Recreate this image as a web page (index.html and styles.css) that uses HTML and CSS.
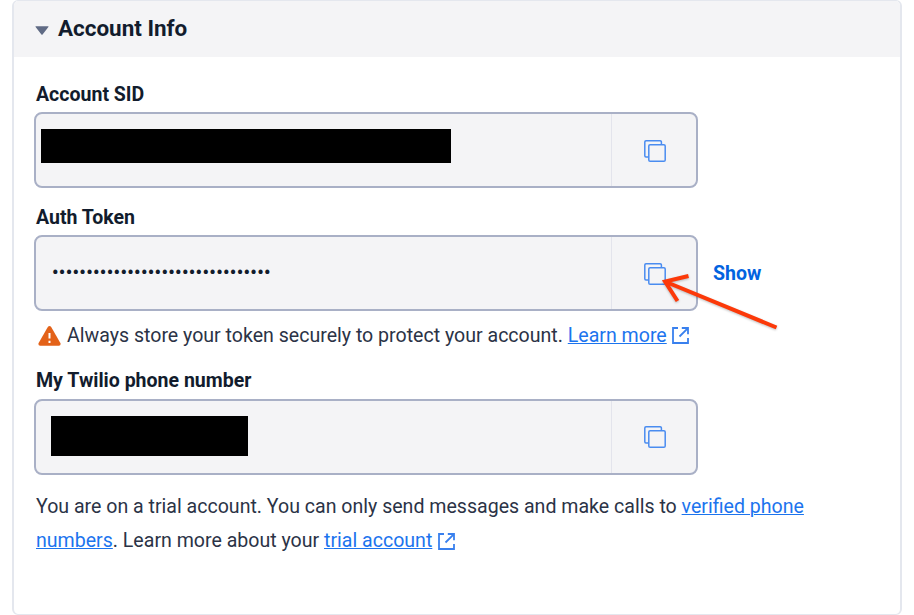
FILE: index.html
```html
<!DOCTYPE html>
<html lang="en">
<head>
<meta charset="utf-8">
<title>Account Info</title>
<link rel="stylesheet" href="styles.css">
</head>
<body>
<svg class="defs" width="0" height="0" aria-hidden="true">
  <symbol id="copy" viewBox="0 0 22 22">
    <path d="M4.500 17H2a1.200 1.200 0 0 1-1.200-1.200V2A1.200 1.200 0 0 1 2 .8h14.200A1.200 1.200 0 0 1 17.400 2v2.700"/>
    <rect x="4.800" y="4.800" width="16.400" height="16.400" rx="1.300"/>
  </symbol>
  <symbol id="external" viewBox="0 0 17 17">
    <path d="M6 1H1v15h15v-5M9.800 1H16v6.200M15.700 1.300 7.500 9.500"/>
  </symbol>
</svg>
<main class="card">
  <header class="card-header">
    <svg class="caret" viewBox="0 0 14 9"><path d="M.8.3h12.400q.6.100.2.600L7.600 8.400q-.6.500-1.200 0L.6.900Q.2.400.8.300z"/></svg>
    <h1>Account Info</h1>
  </header>
  <div class="card-body">
    <section class="group">
      <h2>Account SID</h2>
      <div class="field">
        <div class="value"><span class="redacted redacted-sid"></span></div>
        <button class="copy" aria-label="Copy"><svg><use href="#copy"/></svg></button>
      </div>
    </section>
    <section class="group group-token">
      <h2>Auth Token</h2>
      <div class="field-row">
        <div class="field">
          <div class="value dots">••••••••••••••••••••••••••••••••</div>
          <button class="copy" aria-label="Copy"><svg><use href="#copy"/></svg></button>
        </div>
        <a class="show">Show</a>
        <svg class="arrow" viewBox="0 0 116 58"><path d="M114.500 54.500 3 8.500M26.500 3 3 8.500 15.500 28"/></svg>
      </div>
      <p class="help">
        <svg class="warning" viewBox="0 0 23 20"><path class="warning-shape" d="M9.800 1Q11.500-.8 13.200 1L22.500 17.200Q23.100 19.600 20.800 19.800H2.200Q-.1 19.600.5 17.200z"/><path class="warning-mark" d="M11.500 7v5.600M11.500 14.800v2.200"/></svg>
        <span>Always store your token securely to protect your account. <a class="link">Learn more</a></span>
        <svg class="external"><use href="#external"/></svg>
      </p>
    </section>
    <section class="group group-phone">
      <h2>My Twilio phone number</h2>
      <div class="field">
        <div class="value"><span class="redacted redacted-phone"></span></div>
        <button class="copy" aria-label="Copy"><svg><use href="#copy"/></svg></button>
      </div>
    </section>
    <p class="trial">You are on a trial account. You can only send messages and make calls to <a class="link">verified phone<br>numbers</a>. Learn more about your <a class="link">trial account</a><svg class="external"><use href="#external"/></svg></p>
  </div>
</main>
</body>
</html>
```
FILE: styles.css
```css
* { box-sizing: border-box; }
body {
  margin: 0;
  height: 615px;
  padding: 0 12px;
  overflow: hidden;
  background: #fff;
  color: #2b3346;
  font-family: Roboto, sans-serif;
  font-size: 19.570px;
}
h1, h2, p { margin: 0; }
.defs { position: absolute; }
.card {
  width: 890px;
  height: 615px;
  border: 2px solid #e4e7ee;
  border-top-width: 1px;
  border-bottom-width: 1px;
  border-radius: 6px;
  overflow: hidden;
}
.card-header {
  display: flex;
  align-items: center;
  height: 56px;
  padding-left: 21px;
  background: #f4f4f6;
}
.caret { width: 14px; height: 9px; margin-top: 3px; fill: #606b85; }
h1 {
  margin: 0 0 2px 9px;
  color: #121c2d;
  font-size: 22.450px;
  font-weight: 700;
  line-height: 28px;
}
.card-body { padding: 25px 20px 0; }
.group { margin-bottom: 17px; }
h2 {
  height: 30px;
  padding-left: 2px;
  color: #121c2d;
  font-size: 19.550px;
  font-weight: 700;
  line-height: 25px;
}
.field {
  display: flex;
  width: 664px;
  height: 76px;
  border: 2px solid #a9b0c6;
  border-radius: 8px;
  background: #f4f4f6;
}
.value { flex: 1; }
.dots {
  padding-left: 16px;
  color: #121c2d;
  font-weight: 700;
  font-size: 18px;
  letter-spacing: .370px;
  line-height: 72px;
}
.copy {
  display: flex;
  align-items: center;
  justify-content: center;
  width: 85px;
  padding: 1px 0 0 1px;
  border: 0;
  border-left: 1px solid #e3e4ec;
  background: none;
}
.copy svg { width: 22px; height: 22px; fill: none; stroke: #4a8cf0; stroke-width: 1.500; }
.redacted { display: block; background: #000; }
.redacted-sid { width: 410px; height: 34px; margin: 15px 0 0 5px; }
.redacted-phone { width: 197px; height: 40px; margin: 15px 0 0 15px; }
.field-row { display: flex; align-items: center; position: relative; }
.show { margin-left: 15px; color: #0263e0; font-size: 19.550px; font-weight: 700; }
.arrow {
  position: absolute;
  left: 628px;
  top: 38px;
  width: 116px;
  height: 58px;
  fill: none;
  stroke: #fc3909;
  stroke-width: 4;
  filter: drop-shadow(0 1px 1px rgb(0 0 0 / 25%));
}
.help {
  display: flex;
  align-items: center;
  height: 49px;
  padding-left: 4px;
}
.warning { width: 23px; height: 20px; margin-right: 6px; }
.warning-shape { fill: #e36219; }
.warning-mark { stroke: #fff; stroke-width: 2; }
.group-token { margin-bottom: 8px; }
.group-phone h2 { height: 31px; }
.group-phone .copy { padding-top: 0; }
.link { color: #1c74ee; text-decoration: underline; text-decoration-thickness: 1px; }
.external { width: 17px; height: 17px; margin-left: 6px; fill: none; stroke: #3980ee; stroke-width: 1.800; }
.help .external { margin-left: 5px; }
.trial { padding-left: 2px; line-height: 34px; white-space: nowrap; margin-top: -2px; }
.trial .external { vertical-align: -3px; }
```
